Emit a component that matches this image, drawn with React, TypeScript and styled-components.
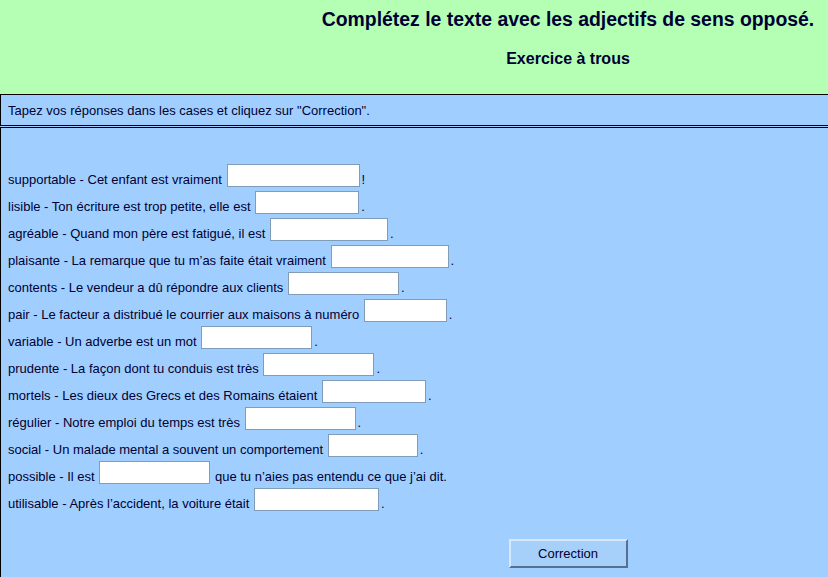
import React from 'react';
import styled, { createGlobalStyle } from 'styled-components';

const GlobalStyle = createGlobalStyle`
  html, body {
    margin: 0;
    padding: 0;
    overflow: hidden;
    background: #b5ffb5;
  }
  body {
    font-family: "Liberation Sans", Arial, sans-serif;
    color: #000033;
  }
`;

const items = [
  { label: 'supportable - Cet enfant est vraiment ', width: 133, tail: '!' },
  { label: 'lisible - Ton écriture est trop petite, elle est ', width: 104, tail: '.' },
  { label: 'agréable - Quand mon père est fatigué, il est ', width: 118, tail: '.' },
  { label: 'plaisante - La remarque que tu m’as faite était vraiment ', width: 118, tail: '.' },
  { label: 'contents - Le vendeur a dû répondre aux clients ', width: 111, tail: '.' },
  { label: 'pair - Le facteur a distribué le courrier aux maisons à numéro ', width: 83, tail: '.' },
  { label: 'variable - Un adverbe est un mot ', width: 111, tail: '.' },
  { label: 'prudente - La façon dont tu conduis est très ', width: 111, tail: '.' },
  { label: 'mortels - Les dieux des Grecs et des Romains étaient ', width: 104, tail: '.' },
  { label: 'régulier - Notre emploi du temps est très ', width: 111, tail: '.' },
  { label: 'social - Un malade mental a souvent un comportement ', width: 90, tail: '.' },
  { label: 'possible - Il est ', width: 111, tail: ' que tu n’aies pas entendu ce que j’ai dit.', wide: true },
  { label: 'utilisable - Après l’accident, la voiture était ', width: 125, tail: '.' },
];

const Page = styled.div`
  width: 1136px;
  height: 577px;
  display: flex;
  flex-direction: column;
`;

const Header = styled.header`
  height: 94px;
  padding-top: 8px;
  box-sizing: border-box;
  text-align: center;
  background: #b5ffb5;
`;

const Title = styled.h1`
  margin: 0;
  font-size: 19.4px;
  line-height: 22px;
  font-weight: bold;
`;

const Subtitle = styled.h2`
  margin: 20px 0 0;
  font-size: 16px;
  line-height: 18px;
  font-weight: bold;
`;

const Body = styled.div`
  flex: 1;
  display: flex;
  flex-direction: column;
  gap: 1px;
  background: #a0cfff;
`;

const Instructions = styled.div`
  height: 32px;
  box-sizing: border-box;
  border: 1px solid #000;
  padding: 8px 7px 7px;
  font-size: 13px;
  line-height: 15px;
`;

const Exercise = styled.div`
  flex: 1;
  border: 1px solid #000;
  border-bottom: none;
  padding: 36px 7px 0;
  font-size: 13px;
  line-height: 15px;
`;

const Row = styled.div`
  display: flex;
  align-items: flex-end;
  height: 23px;
  margin-bottom: 4px;
`;

const Text = styled.span`
  white-space: pre;
`;

const Blank = styled.input<{ $w: number }>`
  width: ${(p) => p.$w}px;
  height: 23px;
  box-sizing: border-box;
  margin: 0 0 0 1px;
  padding: 1px 3px;
  border: 1px solid #7f9db9;
  background: #fff;
  font: 13px "Liberation Sans", Arial, sans-serif;
  outline: none;
`;

const Tail = styled.span<{ $wide: boolean }>`
  white-space: pre;
  margin-left: ${(p) => (p.$wide ? 1 : 2)}px;
`;

const Actions = styled.div`
  display: flex;
  justify-content: center;
  margin-top: 28px;
`;

const CorrectionButton = styled.button`
  width: 119px;
  height: 29px;
  box-sizing: border-box;
  border: 2px solid;
  border-color: #d6e9ff #58708f #58708f #d6e9ff;
  background: #a6cffa;
  color: #000033;
  font: 13px "Liberation Sans", Arial, sans-serif;
  padding: 0;
`;

export default function App() {
  return (
    <Page>
      <GlobalStyle />
      <Header>
        <Title>Complétez le texte avec les adjectifs de sens opposé.</Title>
        <Subtitle>Exercice à trous</Subtitle>
      </Header>
      <Body>
        <Instructions>
          Tapez vos réponses dans les cases et cliquez sur "Correction".
        </Instructions>
        <Exercise>
          {items.map((item, i) => (
            <Row key={i}>
              <Text>{item.label}</Text>
              <Blank type="text" $w={item.width} />
              <Tail $wide={!!item.wide}>{item.tail}</Tail>
            </Row>
          ))}
          <Actions>
            <CorrectionButton type="button">Correction</CorrectionButton>
          </Actions>
        </Exercise>
      </Body>
    </Page>
  );
}
